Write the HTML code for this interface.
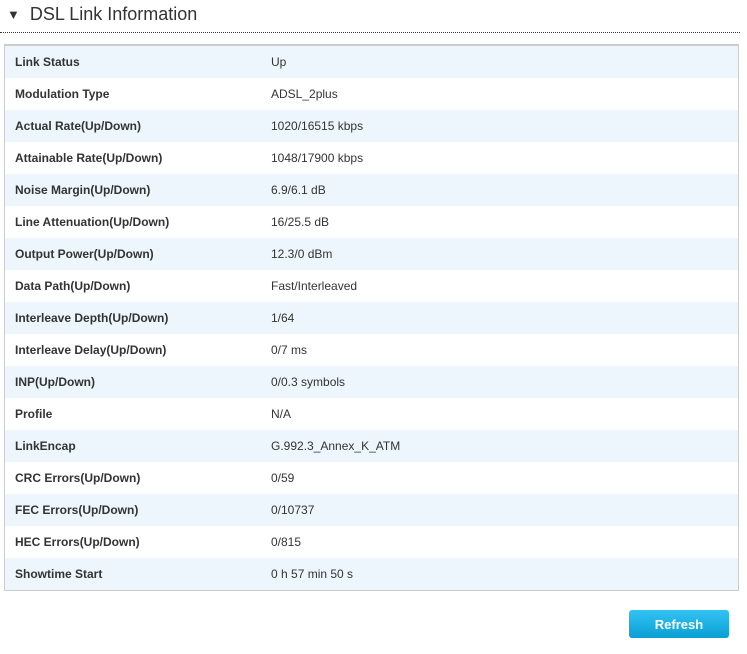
<!DOCTYPE html>
<html><head><style>
body{margin:0;width:747px;height:654px;background:#fff;font-family:"Liberation Sans",sans-serif;position:relative;overflow:hidden}
.h{position:absolute;left:7px;top:4px;font-size:18px;color:#333}
.h span{font-size:13px;margin-right:10px;position:relative;top:-1px}
.dot{position:absolute;left:0;top:32px;width:740px;border-top:1px dotted #333}
.box{position:absolute;left:4px;top:44px;width:733px;border:1px solid #ccc;border-top:2px solid #ccc}
.r{height:32px;line-height:33px;font-size:12px;color:#333;position:relative}
.r:nth-child(odd){background:#eef6fd}
.r b{position:absolute;left:10px}
.r i{font-style:normal;position:absolute;left:266px}
.btn{position:absolute;left:629px;top:610px;width:100px;height:28px;border-radius:3px;background:linear-gradient(#33c3f3,#0a9fd4);color:#fff;font-size:13px;font-weight:bold;text-align:center;line-height:29px}
</style></head><body>
<div class="h"><span>▼</span>DSL Link Information</div>
<div class="dot"></div>
<div class="box">
<div class="r"><b>Link Status</b><i>Up</i></div>
<div class="r"><b>Modulation Type</b><i>ADSL_2plus</i></div>
<div class="r"><b>Actual Rate(Up/Down)</b><i>1020/16515 kbps</i></div>
<div class="r"><b>Attainable Rate(Up/Down)</b><i>1048/17900 kbps</i></div>
<div class="r"><b>Noise Margin(Up/Down)</b><i>6.9/6.1 dB</i></div>
<div class="r"><b>Line Attenuation(Up/Down)</b><i>16/25.5 dB</i></div>
<div class="r"><b>Output Power(Up/Down)</b><i>12.3/0 dBm</i></div>
<div class="r"><b>Data Path(Up/Down)</b><i>Fast/Interleaved</i></div>
<div class="r"><b>Interleave Depth(Up/Down)</b><i>1/64</i></div>
<div class="r"><b>Interleave Delay(Up/Down)</b><i>0/7 ms</i></div>
<div class="r"><b>INP(Up/Down)</b><i>0/0.3 symbols</i></div>
<div class="r"><b>Profile</b><i>N/A</i></div>
<div class="r"><b>LinkEncap</b><i>G.992.3_Annex_K_ATM</i></div>
<div class="r"><b>CRC Errors(Up/Down)</b><i>0/59</i></div>
<div class="r"><b>FEC Errors(Up/Down)</b><i>0/10737</i></div>
<div class="r"><b>HEC Errors(Up/Down)</b><i>0/815</i></div>
<div class="r"><b>Showtime Start</b><i>0 h 57 min 50 s</i></div>
</div>
<div class="btn">Refresh</div>
</body></html>
